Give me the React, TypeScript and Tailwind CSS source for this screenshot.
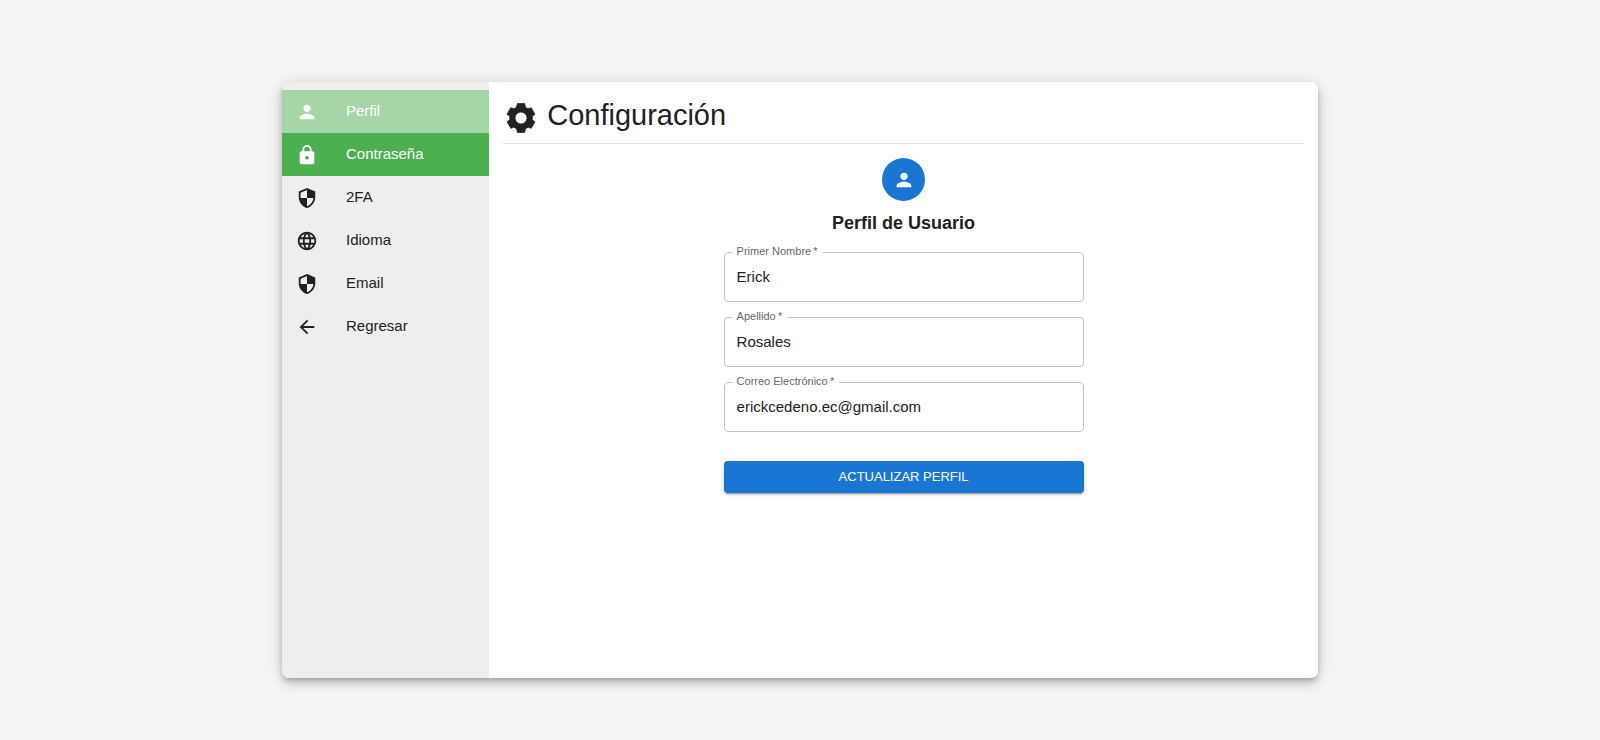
import type { IconType } from "react-icons";
import {
  MdArrowBack,
  MdLanguage,
  MdLock,
  MdPerson,
  MdSecurity,
} from "react-icons/md";

type NavItem = { label: string; icon: IconType; look: string };

const plain = "text-[#212121] hover:bg-black/5";

const navItems: NavItem[] = [
  { label: "Perfil", icon: MdPerson, look: "bg-[#a5d6a7] text-white" },
  { label: "Contraseña", icon: MdLock, look: "bg-[#4caf50] text-white" },
  { label: "2FA", icon: MdSecurity, look: plain },
  { label: "Idioma", icon: MdLanguage, look: plain },
  { label: "Email", icon: MdSecurity, look: plain },
  { label: "Regresar", icon: MdArrowBack, look: plain },
];

function GearIcon({ className }: { className?: string }) {
  return (
    <svg
      viewBox="-12 -12 24 24"
      fill="currentColor"
      stroke="currentColor"
      strokeWidth="0.5"
      strokeLinejoin="round"
      className={className}
      aria-hidden="true"
    >
      <path
        fillRule="evenodd"
        d="M-2.4-9.7H2.4L3-7.1Q3.9-6.7 4.7-6.1L6.8-6.9L9.3-2.5L7.5-1.1Q7.6 0 7.5 1.1L9.3 2.5L6.8 6.9L4.7 6.1Q3.9 6.7 3 7.1L2.4 9.7H-2.4L-3 7.1Q-3.9 6.7-4.7 6.1L-6.8 6.9L-9.3 2.5L-7.5 1.1Q-7.6 0-7.5-1.1L-9.3-2.5L-6.8-6.9L-4.7-6.1Q-3.9-6.7-3-7.1ZM0-4A4 4 0 1 0 0 4A4 4 0 1 0 0-4Z"
      />
    </svg>
  );
}

function Sidebar() {
  return (
    <nav className="w-1/5 shrink-0 bg-[#eeeeee] py-2">
      <ul>
        {navItems.map(({ label, icon: Icon, look }) => (
          <li key={label}>
            <button
              type="button"
              className={`flex h-[43px] w-full items-center gap-7 px-3.5 text-left text-[15px] leading-5 ${look}`}
            >
              <Icon className="size-[22px] shrink-0" aria-hidden="true" />
              <span className="pb-0.5">{label}</span>
            </button>
          </li>
        ))}
      </ul>
    </nav>
  );
}

type FieldProps = { id: string; label: string; type?: string; value: string };

function Field({ id, label, type = "text", value }: FieldProps) {
  return (
    <div className="relative">
      <label
        htmlFor={id}
        className="absolute -top-[9px] left-2 bg-white px-[5px] text-[11px] leading-4 text-[#666666]"
      >
        {label}&thinsp;*
      </label>
      <input
        id={id}
        type={type}
        required
        defaultValue={value}
        className="h-[50px] w-full rounded border border-[#c4c4c4] bg-white px-3 pb-0.5 text-[15px] text-[#212121] outline-none focus:border-[#1976d2]"
      />
    </div>
  );
}

export default function App() {
  return (
    <div className="flex min-h-screen justify-center bg-[#f5f5f5] px-4 pt-[82px] pb-[62px] font-['Liberation_Sans',Arial,sans-serif] text-[#212121]">
      <div className="flex w-full max-w-[1036px] overflow-hidden rounded-[7px] bg-white shadow-[0_3px_5px_-1px_rgba(0,0,0,0.2),0_6px_10px_0_rgba(0,0,0,0.14),0_1px_18px_0_rgba(0,0,0,0.12)]">
        <Sidebar />
        <main className="min-w-0 flex-1 px-3.5 py-[15px]">
          <header className="flex items-end gap-2 border-b border-[#e0e0e0] pb-[7px]">
            <GearIcon className="size-9 shrink-0" />
            <h1 className="pb-[3px] text-[29px] leading-9">Configuración</h1>
          </header>
          <form
            className="mx-auto flex w-full max-w-[360px] flex-col pt-3.5"
            onSubmit={(e) => e.preventDefault()}
          >
            <div className="flex size-[43px] items-center justify-center self-center rounded-full bg-[#1976d2] text-white">
              <MdPerson className="size-[22px]" aria-hidden="true" />
            </div>
            <h2 className="mt-2 text-center text-[18px] leading-7 font-bold">
              Perfil de Usuario
            </h2>
            <div className="mt-[15px] flex flex-col gap-[15px]">
              <Field id="nombre" label="Primer Nombre" value="Erick" />
              <Field id="apellido" label="Apellido" value="Rosales" />
              <Field
                id="correo"
                label="Correo Electrónico"
                type="email"
                value="erickcedeno.ec@gmail.com"
              />
            </div>
            <button
              type="submit"
              className="mt-[29px] h-8 rounded bg-[#1976d2] text-[13px] leading-5 text-white uppercase shadow-[0_3px_1px_-2px_rgba(0,0,0,0.2),0_2px_2px_0_rgba(0,0,0,0.14),0_1px_5px_0_rgba(0,0,0,0.12)]"
            >
              Actualizar perfil
            </button>
          </form>
        </main>
      </div>
    </div>
  );
}
